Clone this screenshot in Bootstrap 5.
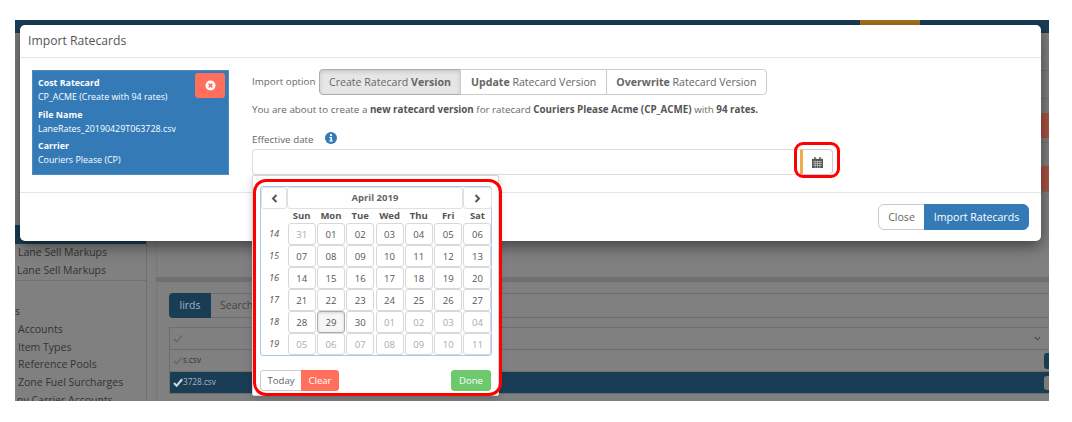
<!DOCTYPE html>
<html lang="en">
<head>
<meta charset="utf-8">
<title>Import Ratecards</title>
<link rel="stylesheet" href="https://cdn.jsdelivr.net/npm/bootstrap@5.3.0/dist/css/bootstrap.min.css">
<style>
html,body{height:100%;background:#fff;overflow:hidden}
body{font-family:"Open Sans","Liberation Sans",sans-serif;font-size:10px;color:#555;padding:20px 23px 21px 15px}
.stage{position:relative;height:381px;background:#808080;overflow:hidden;display:flex;flex-direction:column}
.topband{height:13px;background:#1a3d56;flex:none;display:flex;justify-content:flex-end;padding-right:129px}
.topband i{display:block;width:60px;height:5px;background:#a8741f}
.back{flex:1;display:flex;min-height:0}
.side{width:132px;flex:none;border-right:1px solid #707070;display:flex;flex-direction:column;padding-top:192px;color:#333;font-size:10.5px}
.side-on{height:19px;background:#1a3d56;flex:none}
.side-row{height:17.7px;flex:none;line-height:17.7px;padding-left:2px;white-space:nowrap}
.side-row.in{padding-left:3px}
.side-rule{border-top:1px solid #707070;margin-top:1px;height:23px;flex:none}
.side-row.cut{height:14px;overflow:hidden}
.backmain{flex:1;min-width:0;padding-left:9px;display:flex;flex-direction:column}
.up{height:244px;flex:none;border-left:1px solid #787878;display:flex;flex-direction:column}
.uprow{border-bottom:1px solid #737373;flex:none;display:flex;justify-content:flex-end;color:#333;font-size:10.5px}
.uprow.r1{height:38px;align-items:center}
.uprow.r2{height:28px}
.uprow.r3{height:44px}
.redpill{width:8px;height:25px;background:#a85444;border-radius:3px 0 0 3px;margin-top:14px;color:#5a2c22;font-size:10px;line-height:25px;overflow:hidden}
.redpill.b{margin-top:23px}
.sep{height:5px;background:#707070;flex:none}
.low{flex:1;padding:11px 0 0 12px;min-height:0;border-left:1px solid #787878}
.tabs{display:flex;height:25px;font-size:10.5px}
.tab-on{width:42px;background:#1a3d56;color:#9fb3c2;border-radius:4px 0 0 4px;text-align:center;line-height:25px}
.tab-off{flex:1;border:1px solid #6e6e6e;border-left:0;border-right:0;color:#444;padding-left:9px;line-height:23px}
.grid-box{margin-top:9px;border:1px solid #6e6e6e;border-right:0}
.grid-row{height:22px;border-bottom:1px solid #6e6e6e;display:flex;align-items:center;padding-left:3px;font-size:8.2px;color:#333;position:relative}
.grid-row.sel{background:#1a3d56;color:#a8b7c2;border-bottom:0;height:21px}
.grid-row svg{width:11px;height:10px;margin-right:-1px}
.grid-row svg.chev{position:absolute;right:9px;top:7px;width:7px;height:7px}
.tabbtn{position:absolute;right:0;top:3px;width:5px;height:16px;background:#1a3d56;border-radius:3px 0 0 3px}
.tabbtn.g{background:#7c7c7c;top:4px;height:14px}

.dlg.modal-content{position:absolute;left:5px;top:5px;width:1021px;height:216px;border:0;border-radius:5px;background:#fff;box-shadow:0 5px 15px rgba(0,0,0,.5);color:#555}
.dlg .modal-header{height:33px;padding:0 8px;border-bottom:1px solid #e5e5e5;flex:none}
.dlg-title{font-size:12.2px;font-weight:400;color:#555;margin:0}
.dlg .modal-body{padding:12px 12px 0;display:flex;flex:none;height:134px}
.filebox{width:197px;height:105px;flex:none;background:#337ab7;color:#fff;border:1px solid #4d8cc0;padding:5px;position:relative;font-size:8.9px;line-height:14px}
.filebox b{display:block;font-weight:700}
.filebox p{margin:0 0 3.5px}
.rmbtn{position:absolute;right:3px;top:2px;width:30px;height:25px;padding:0;background:#ff6f5b;border:0;border-radius:3px;display:flex;align-items:center;justify-content:center}
.rmbtn svg{width:11px;height:11px}
.opts{margin-left:23px;width:581px;flex:none}
.optrow{display:flex;align-items:center;gap:3px;height:26px;margin-top:-1px;font-size:9.8px;color:#666}
.optgroup .btn{font-size:10.6px;color:#666;padding:0 9.5px;height:26px;line-height:24px;border-color:#ccc;background:#fff;border-radius:4px;white-space:nowrap}
.optgroup .btn.on{background:#e6e6e6;border-color:#adadad;box-shadow:inset 0 2px 4px rgba(0,0,0,.13)}
.msg{margin:8px 0 0;font-size:9.8px;line-height:14px;color:#666;white-space:nowrap}
.msg b{color:#555}
.eff{margin-top:17px;display:flex;align-items:center;height:12px;font-size:9.8px;color:#666}
.eff svg{width:12px;height:12px;margin-left:11px;margin-top:-4px}
.dateline{display:flex;margin-top:3px;height:26px;position:relative}
.datefield{flex:1;height:26px;border:1px solid #ddd;border-right:0;border-radius:4px 0 0 4px;padding:0;box-shadow:none}
.calbtn{width:33px;height:26px;flex:none;padding:0;background:#fff;border:1px solid #ccc;border-left:3px solid #f0ad4e;border-radius:0 4px 4px 0;display:flex;align-items:center;justify-content:center}
.calbtn svg{width:11px;height:11px}
.picker{position:absolute;left:0;top:26px;width:247px;height:221px;background:#fff;border:1px solid #d5d5d5;border-radius:2px;padding:10px 7px 0;z-index:3;box-shadow:0 3px 8px rgba(0,0,0,.18)}
.pgrid{display:grid;grid-template-columns:26px repeat(7,29.3px);grid-template-rows:22px 14px repeat(6,22px);border:1px solid #a9c8ef;border-radius:3px;width:232px;height:170px;font-size:9.5px;align-items:center;text-align:center}
.pgrid .hdrbtn{grid-row:1;height:22px;padding:0;border:1px solid #e0e0e0;background:#fff;border-radius:3px;font-weight:700;font-size:9.5px;color:#666;display:flex;align-items:center;justify-content:center}
.hdrbtn svg{width:7px;height:9px}
.title-span{grid-column:2 / span 6}
.hdr-next{grid-column:8}
.pgrid span{font-weight:700;color:#555;height:13px;line-height:13px;align-self:start}
.pgrid em{color:#555;font-size:9.3px}
.pgrid .day{height:21.5px;padding:0;margin:0 .7px;border:1px solid #d8d8d8;background:#fff;border-radius:3px;font-size:9.6px;color:#555;line-height:19px}
.pgrid .day.mut{color:#aaa}
.pgrid .day.today{background:#f7f7f7;border-color:#adadad;box-shadow:inset 0 1px 3px rgba(0,0,0,.15)}
.wkhead{height:13px;display:block}
.pfoot{display:flex;justify-content:space-between;margin-top:14px;height:21px}
.pfoot .btn{font-size:9.6px;padding:0;height:21px;line-height:19px;border-radius:3px}
.pfoot .tbtn{width:42px;background:#fff;border:1px solid #ccc;color:#666;border-radius:3px 0 0 3px}
.pfoot .cbtn{width:38px;background:#ff6f5b;border:1px solid #ff6f5b;color:#fff;border-radius:0 3px 3px 0}
.pfoot .dbtn{width:40px;background:#6cc96c;border:1px solid #6cc96c;color:#fff}
.dlg .modal-footer{padding:0 12px;border-top:1px solid #e5e5e5;height:49px;flex:none;display:flex;justify-content:flex-end;align-items:center}
.footgroup .btn{font-size:10.6px;height:26px;padding:0;line-height:24px}
.footgroup .closeb{width:47px;background:#fff;border:1px solid #ccc;color:#666}
.footgroup .importb{width:105px;background:#337ab7;border:1px solid #337ab7;color:#fff}
.ring{position:absolute;border:3px solid #f00;pointer-events:none;z-index:5}
.ring.one{left:779px;top:122px;width:46px;height:36px;border-radius:9px}
.ring.two{left:238px;top:159px;width:249px;height:217px;border-radius:13px}
</style>
</head>
<body>
<div class="stage">
  <div class="topband"><i></i></div>
  <div class="back">
    <div class="side">
      <div class="side-on"></div>
      <div class="side-row in">Lane Sell Markups</div>
      <div class="side-row">Lane Sell Markups</div>
      <div class="side-rule"></div>
      <div class="side-row" style="padding-left:0">s</div>
      <div class="side-row in">Accounts</div>
      <div class="side-row in">Item Types</div>
      <div class="side-row in">Reference Pools</div>
      <div class="side-row in">Zone Fuel Surcharges</div>
      <div class="side-row cut">ny Carrier Accounts</div>
    </div>
    <div class="backmain">
      <div class="up">
        <div class="uprow r1"></div>
        <div class="uprow r2"></div>
        <div class="uprow r3"><div class="redpill"></div></div>
        <div class="uprow"><div class="redpill b"></div></div>
      </div>
      <div class="sep"></div>
      <div class="low">
        <div class="tabs"><div class="tab-on">lirds</div><div class="tab-off">Search</div></div>
        <div class="grid-box">
          <div class="grid-row"><svg viewBox="0 0 12 10"><path d="M1 5l3 3 6-7" fill="none" stroke="#6c6c6c" stroke-width="2"/></svg><svg class="chev" viewBox="0 0 8 8"><path d="M1 2.5l3 3 3-3" fill="none" stroke="#444" stroke-width="1.2"/></svg></div>
          <div class="grid-row"><svg viewBox="0 0 12 10"><path d="M1 5l3 3 6-7" fill="none" stroke="#6c6c6c" stroke-width="2"/></svg>s.csv<div class="tabbtn"></div></div>
          <div class="grid-row sel"><svg viewBox="0 0 12 10"><path d="M1 5l3 3 6-7" fill="none" stroke="#cfd6db" stroke-width="2.4"/></svg>3728.csv<div class="tabbtn g"></div></div>
        </div>
      </div>
    </div>
  </div>

  <div class="modal-content dlg">
    <div class="modal-header"><h5 class="dlg-title">Import Ratecards</h5></div>
    <div class="modal-body">
      <div class="filebox">
        <p><b>Cost Ratecard</b>CP_ACME (Create with 94 rates)</p>
        <p><b>File Name</b>LaneRates_20190429T063728.csv</p>
        <p><b>Carrier</b>Couriers Please (CP)</p>
        <button type="button" class="rmbtn" aria-label="Remove"><svg viewBox="0 0 12 12"><circle cx="6" cy="6" r="5.5" fill="#fff"/><path d="M4 4l4 4M8 4l-4 4" stroke="#ff6f5b" stroke-width="1.7"/></svg></button>
      </div>
      <div class="opts">
        <div class="optrow">
          <label>Import option</label>
          <div class="btn-group optgroup">
            <button type="button" class="btn on">Create Ratecard <b>Version</b></button>
            <button type="button" class="btn"><b>Update</b> Ratecard Version</button>
            <button type="button" class="btn"><b>Overwrite</b> Ratecard Version</button>
          </div>
        </div>
        <p class="msg">You are about to create a <b>new ratecard version</b> for ratecard <b>Couriers Please Acme (CP_ACME)</b> with <b>94 rates.</b></p>
        <div class="eff">Effective date<svg viewBox="0 0 12 12"><circle cx="6" cy="6" r="6" fill="#337ab7"/><rect x="5" y="2.2" width="2" height="1.9" fill="#fff"/><path d="M4.3 5h2.7v3.6h1v1H4.3v-1h1V6h-1z" fill="#fff"/></svg></div>
        <div class="dateline">
          <input type="text" class="form-control datefield" aria-label="Effective date">
          <button type="button" class="calbtn" aria-label="Calendar"><svg viewBox="0 0 12 12"><path d="M0 2h12v10H0z" fill="#555"/><path d="M2.5 0h1.5v3H2.5zM8 0h1.5v3H8z" fill="#555"/><path d="M1 5h10M1 7h10M1 9.2h10M3.5 4v8M6 4v8M8.5 4v8" stroke="#ddd" stroke-width=".6"/></svg></button>
          <div class="picker">
            <div class="pgrid">
              <button type="button" class="hdrbtn" aria-label="Previous"><svg viewBox="0 0 7 9"><path d="M5.5 1L2 4.5 5.5 8" fill="none" stroke="#555" stroke-width="2"/></svg></button>
              <button type="button" class="hdrbtn title-span">April 2019</button>
              <button type="button" class="hdrbtn hdr-next" aria-label="Next"><svg viewBox="0 0 7 9"><path d="M1.5 1L5 4.5 1.5 8" fill="none" stroke="#555" stroke-width="2"/></svg></button>
              <i class="wkhead"></i><span>Sun</span><span>Mon</span><span>Tue</span><span>Wed</span><span>Thu</span><span>Fri</span><span>Sat</span>
              <em>14</em><button class="btn day mut">31</button><button class="btn day">01</button><button class="btn day">02</button><button class="btn day">03</button><button class="btn day">04</button><button class="btn day">05</button><button class="btn day">06</button>
              <em>15</em><button class="btn day">07</button><button class="btn day">08</button><button class="btn day">09</button><button class="btn day">10</button><button class="btn day">11</button><button class="btn day">12</button><button class="btn day">13</button>
              <em>16</em><button class="btn day">14</button><button class="btn day">15</button><button class="btn day">16</button><button class="btn day">17</button><button class="btn day">18</button><button class="btn day">19</button><button class="btn day">20</button>
              <em>17</em><button class="btn day">21</button><button class="btn day">22</button><button class="btn day">23</button><button class="btn day">24</button><button class="btn day">25</button><button class="btn day">26</button><button class="btn day">27</button>
              <em>18</em><button class="btn day">28</button><button class="btn day today">29</button><button class="btn day">30</button><button class="btn day mut">01</button><button class="btn day mut">02</button><button class="btn day mut">03</button><button class="btn day mut">04</button>
              <em>19</em><button class="btn day mut">05</button><button class="btn day mut">06</button><button class="btn day mut">07</button><button class="btn day mut">08</button><button class="btn day mut">09</button><button class="btn day mut">10</button><button class="btn day mut">11</button>
            </div>
            <div class="pfoot">
              <div class="btn-group"><button type="button" class="btn tbtn">Today</button><button type="button" class="btn cbtn">Clear</button></div>
              <button type="button" class="btn dbtn">Done</button>
            </div>
          </div>
        </div>
      </div>
    </div>
    <div class="modal-footer">
      <div class="btn-group footgroup"><button type="button" class="btn closeb">Close</button><button type="button" class="btn importb">Import Ratecards</button></div>
    </div>
  </div>
  <div class="ring one"></div>
  <div class="ring two"></div>
</div>
<script src="https://cdn.jsdelivr.net/npm/bootstrap@5.3.0/dist/js/bootstrap.bundle.min.js"></script>
</body>
</html>
